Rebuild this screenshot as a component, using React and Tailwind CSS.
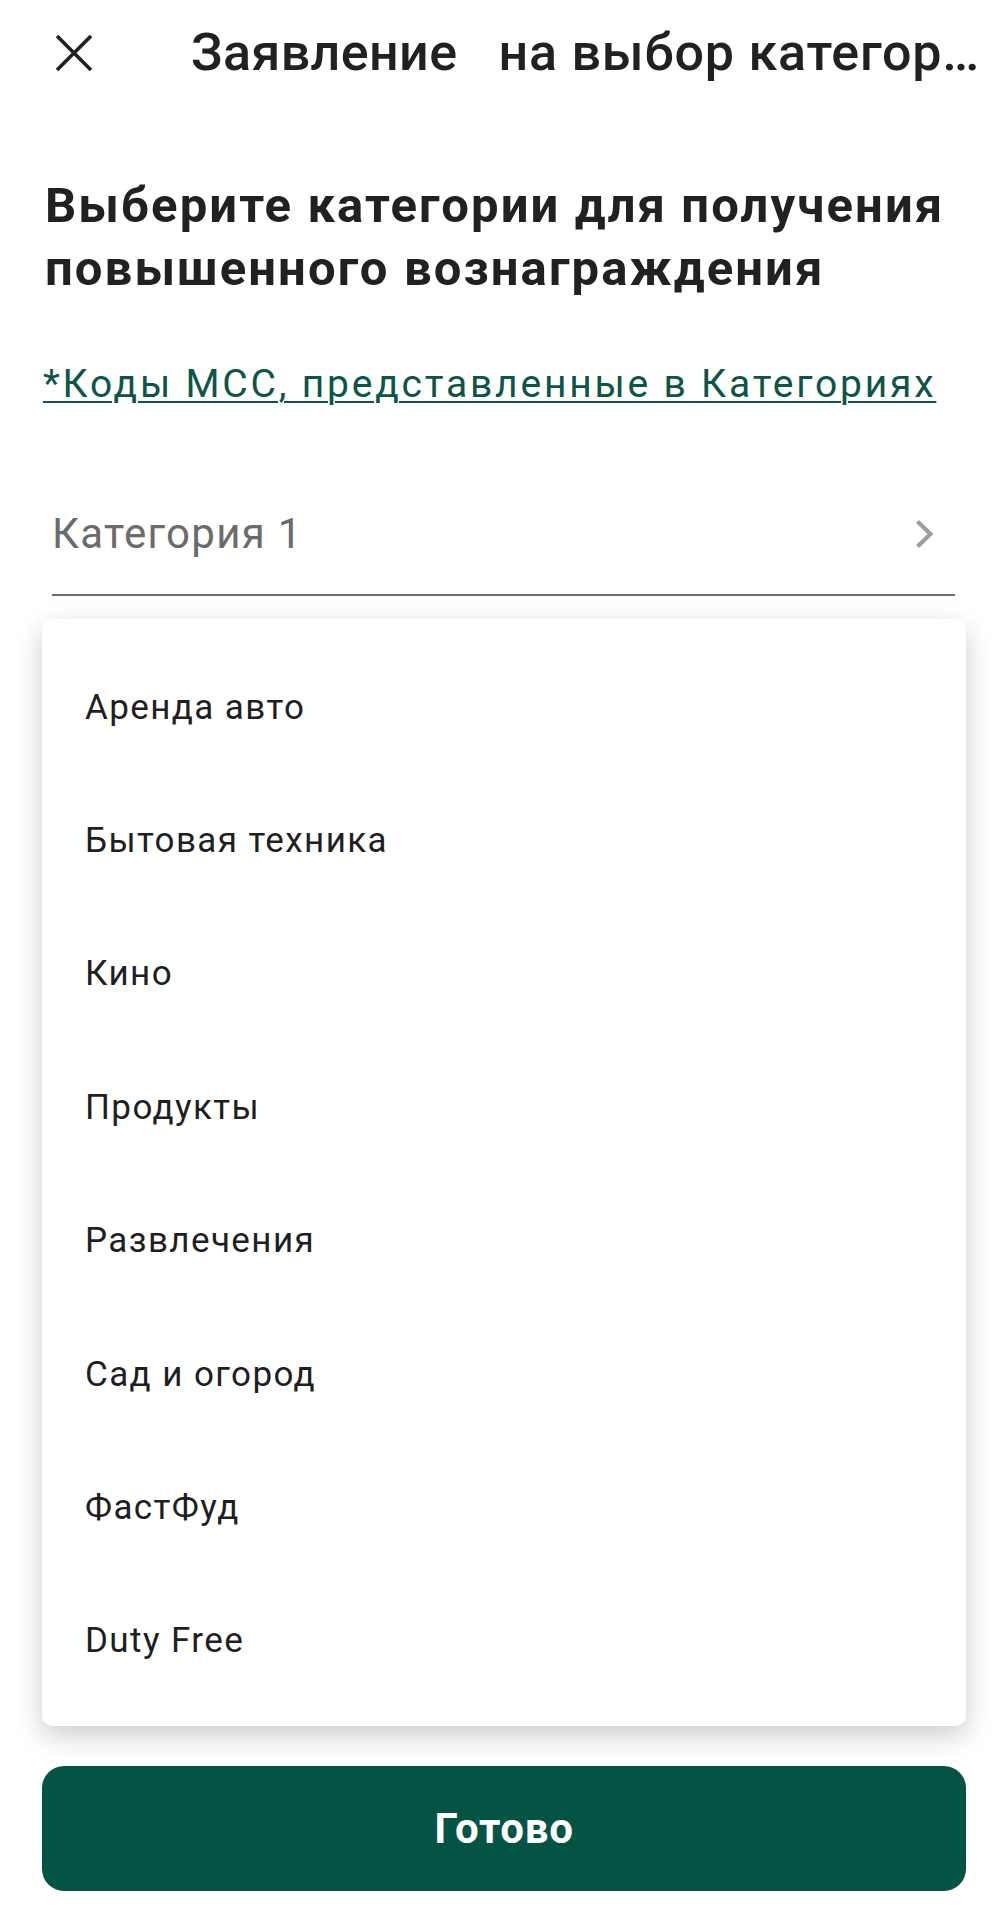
import React from "react";

const items = [
  "Аренда авто",
  "Бытовая техника",
  "Кино",
  "Продукты",
  "Развлечения",
  "Сад и огород",
  "ФастФуд",
  "Duty Free",
];

export default function App() {
  return (
    <div
      className="w-[1008px] h-[1908px] bg-white text-[#212121] overflow-hidden"
      style={{ fontFamily: 'Roboto, "Noto Sans", "Liberation Sans", sans-serif' }}
    >
      {/* Header */}
      <div className="h-[106px] flex items-center">
        <div className="ml-[56px] w-[36px] h-[36px] flex items-center justify-center">
          <svg width="36" height="36" viewBox="0 0 36 36" fill="none">
            <path d="M1 1 L35 35 M35 1 L1 35" stroke="#212121" strokeWidth="3.6" />
          </svg>
        </div>
        <div className="ml-[99px] flex items-center text-[52px] font-medium leading-[60px] whitespace-nowrap">
          <span className="tracking-[0.4px]">Заявление</span>
          <span className="ml-[41px] tracking-[0.8px]">на выбор категор…</span>
        </div>
      </div>

      {/* Heading */}
      <h1 className="mt-[68px] ml-[45px] text-[49px] font-bold leading-[63px] tracking-[2.1px] text-[#212121] whitespace-nowrap">
        Выберите категории для получения
        <br />
        повышенного вознаграждения
      </h1>

      {/* Link */}
      <div className="mt-[59px] ml-[43px] text-[39px] leading-[50px] tracking-[2.8px] text-[#0d5546] underline decoration-[2px] underline-offset-[4px] decoration-[#0d5546] whitespace-nowrap">
        *Коды MCC, представленные в Категориях
      </div>

      {/* Field */}
      <div className="mt-[95px] ml-[52px] w-[903px] border-b-2 border-[#6f6f6f] pb-[30px]">
        <div className="h-[60px] flex items-center justify-between pr-[22px]">
          <span className="text-[42px] leading-[60px] tracking-[1.3px] text-[#6b6b6b]">Категория 1</span>
          <svg width="18" height="30" viewBox="0 0 18 30" fill="none">
            <path d="M2.5 2.5 L15.5 15 L2.5 27.5" stroke="#9e9e9e" strokeWidth="4.2" />
          </svg>
        </div>
      </div>

      {/* Dropdown card */}
      <div className="mt-[23px] ml-[42px] w-[924px] bg-white rounded-[10px] shadow-[0_10px_28px_rgba(0,0,0,0.2)] pt-[22px] pb-[18px]">
        {items.map((it) => (
          <div
            key={it}
            className="h-[133.4px] flex items-center pl-[43px] text-[35px] leading-[44px] tracking-[1.4px] text-[#1f1f1f]"
          >
            {it}
          </div>
        ))}
      </div>

      {/* Button */}
      <div className="mt-[40px] ml-[42px] w-[924px] h-[125px] rounded-[22px] bg-[#035445] flex items-center justify-center">
        <span className="text-[42px] font-bold text-white leading-[50px] tracking-[0.7px]">Готово</span>
      </div>
    </div>
  );
}
